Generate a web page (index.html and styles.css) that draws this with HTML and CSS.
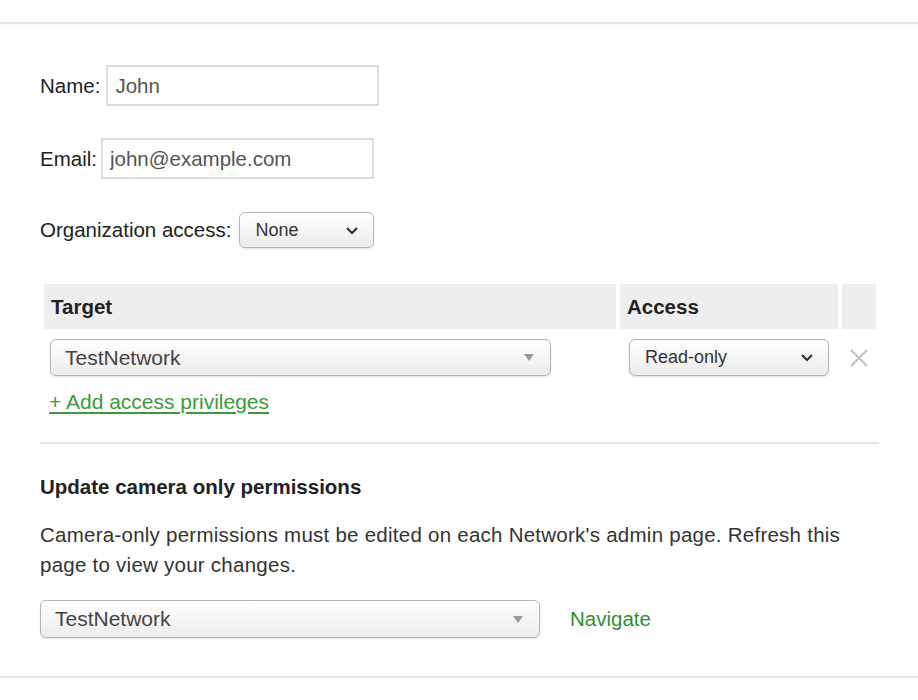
FILE: index.html
```html
<!DOCTYPE html>
<html lang="en">
<head>
  <meta charset="UTF-8">
  <title>Edit administrator</title>
  <link rel="stylesheet" href="styles.css">
</head>
<body>
  <div class="topbar"></div>

  <div class="content">
    <div class="field field-name">
      <label for="name">Name:</label>
      <input id="name" type="text" value="John">
    </div>

    <div class="field field-email">
      <label for="email">Email:</label>
      <input id="email" type="text" value="john@example.com">
    </div>

    <div class="field field-org">
      <label>Organization access:</label>
      <div class="select select-native select-org">
        <span>None</span>
        <svg class="chevron" width="14" height="9" viewBox="0 0 14 9"><path d="M2 2l5 5 5-5" fill="none" stroke="#333" stroke-width="2.2"/></svg>
      </div>
    </div>

    <div class="privileges">
      <div class="th">Target</div>
      <div class="th">Access</div>
      <div class="th"></div>

      <div class="td">
        <div class="select select-chosen select-target">
          <span>TestNetwork</span>
          <span class="caret"></span>
        </div>
      </div>
      <div class="td">
        <div class="select select-native select-access">
          <span>Read-only</span>
          <svg class="chevron" width="14" height="9" viewBox="0 0 14 9"><path d="M2 2l5 5 5-5" fill="none" stroke="#333" stroke-width="2.2"/></svg>
        </div>
      </div>
      <div class="td td-remove">
        <svg width="20" height="20" viewBox="0 0 20 20"><path d="M2 2l16 16M18 2L2 18" stroke="#c4c4c4" stroke-width="2.4"/></svg>
      </div>
    </div>

    <a class="add-link" href="#">+ Add access privileges</a>

    <hr class="divider">

    <h2 class="section-title">Update camera only permissions</h2>
    <p class="section-text">Camera-only permissions must be edited on each Network's admin page. Refresh this page to view your changes.</p>

    <div class="navigate-row">
      <div class="select select-chosen select-camera">
        <span>TestNetwork</span>
        <span class="caret"></span>
      </div>
      <a class="navigate" href="#">Navigate</a>
    </div>
  </div>

  <div class="bottombar"></div>
</body>
</html>
```

FILE: styles.css
```css
body {
  margin: 0;
  font-family: "Liberation Sans", Arial, sans-serif;
  font-size: 20.5px;
  color: #222;
  background: #fff;
}
.topbar {
  height: 22px;
  border-bottom: 2px solid #e6e6e6;
  box-shadow: 0 2px 4px rgba(0, 0, 0, 0.03);
}
.content {
  padding: 41px 0 0 40px;
  width: 839px;
}
.field {
  display: flex;
  align-items: center;
  gap: 6px;
}
.field label {
  color: #222;
}
.field input {
  width: 273px;
  height: 41px;
  box-sizing: border-box;
  border: 2px solid #dcdcdc;
  padding: 0 7px;
  font-family: inherit;
  font-size: 20.5px;
  color: #555;
  outline: none;
}
.field-email {
  margin-top: 32px;
  gap: 4px;
}
.field-org {
  margin-top: 33px;
  gap: 8px;
}
.select {
  display: flex;
  align-items: center;
  justify-content: space-between;
  box-sizing: border-box;
  border: 1.5px solid #b4b4b4;
  border-radius: 6px;
  background: linear-gradient(#ffffff, #ececec);
  box-shadow: 0 1px 2px rgba(0, 0, 0, 0.12);
  color: #333;
}
.select-native {
  font-size: 18px;
  padding: 0 14px 0 15px;
}
.select-org {
  width: 135px;
  height: 36px;
}
.select-chosen {
  font-size: 21px;
  padding: 0 16px 0 14px;
  color: #444;
}
.caret {
  width: 0;
  height: 0;
  border-left: 5px solid transparent;
  border-right: 5px solid transparent;
  border-top: 7px solid #999;
}
.privileges {
  margin: 36px 0 0 4px;
  display: grid;
  grid-template-columns: 572px 218px 34px;
  column-gap: 4px;
}
.th {
  background: #eeeeee;
  height: 45px;
  display: flex;
  align-items: center;
  padding-left: 7px;
  font-weight: bold;
}
.td {
  padding-top: 10px;
  display: flex;
}
.select-target {
  margin-left: 6px;
  width: 501px;
  height: 37px;
}
.select-access {
  margin-left: 9px;
  width: 200px;
  height: 37px;
}
.td-remove {
  padding-top: 19px;
  padding-left: 7px;
}
.add-link {
  display: inline-block;
  margin: 14px 0 0 9px;
  font-size: 21px;
  color: #3a9a3a;
  text-decoration: underline;
  text-underline-offset: 3px;
}
.divider {
  margin: 28px 0 0 0;
  border: 0;
  border-top: 2px solid #e6e6e6;
}
.section-title {
  margin: 31px 0 0 0;
  font-size: 20.5px;
  font-weight: bold;
  color: #222;
}
.section-text {
  margin: 21px 0 0 0;
  line-height: 30px;
  letter-spacing: 0.25px;
  color: #333;
  width: 830px;
}
.navigate-row {
  margin-top: 20px;
  display: flex;
  align-items: center;
  gap: 30px;
}
.select-camera {
  width: 500px;
  height: 38px;
}
.navigate {
  color: #2f8f2f;
  text-decoration: none;
}
.bottombar {
  margin-top: 38px;
  border-top: 2px solid #e6e6e6;
  height: 30px;
}
```
